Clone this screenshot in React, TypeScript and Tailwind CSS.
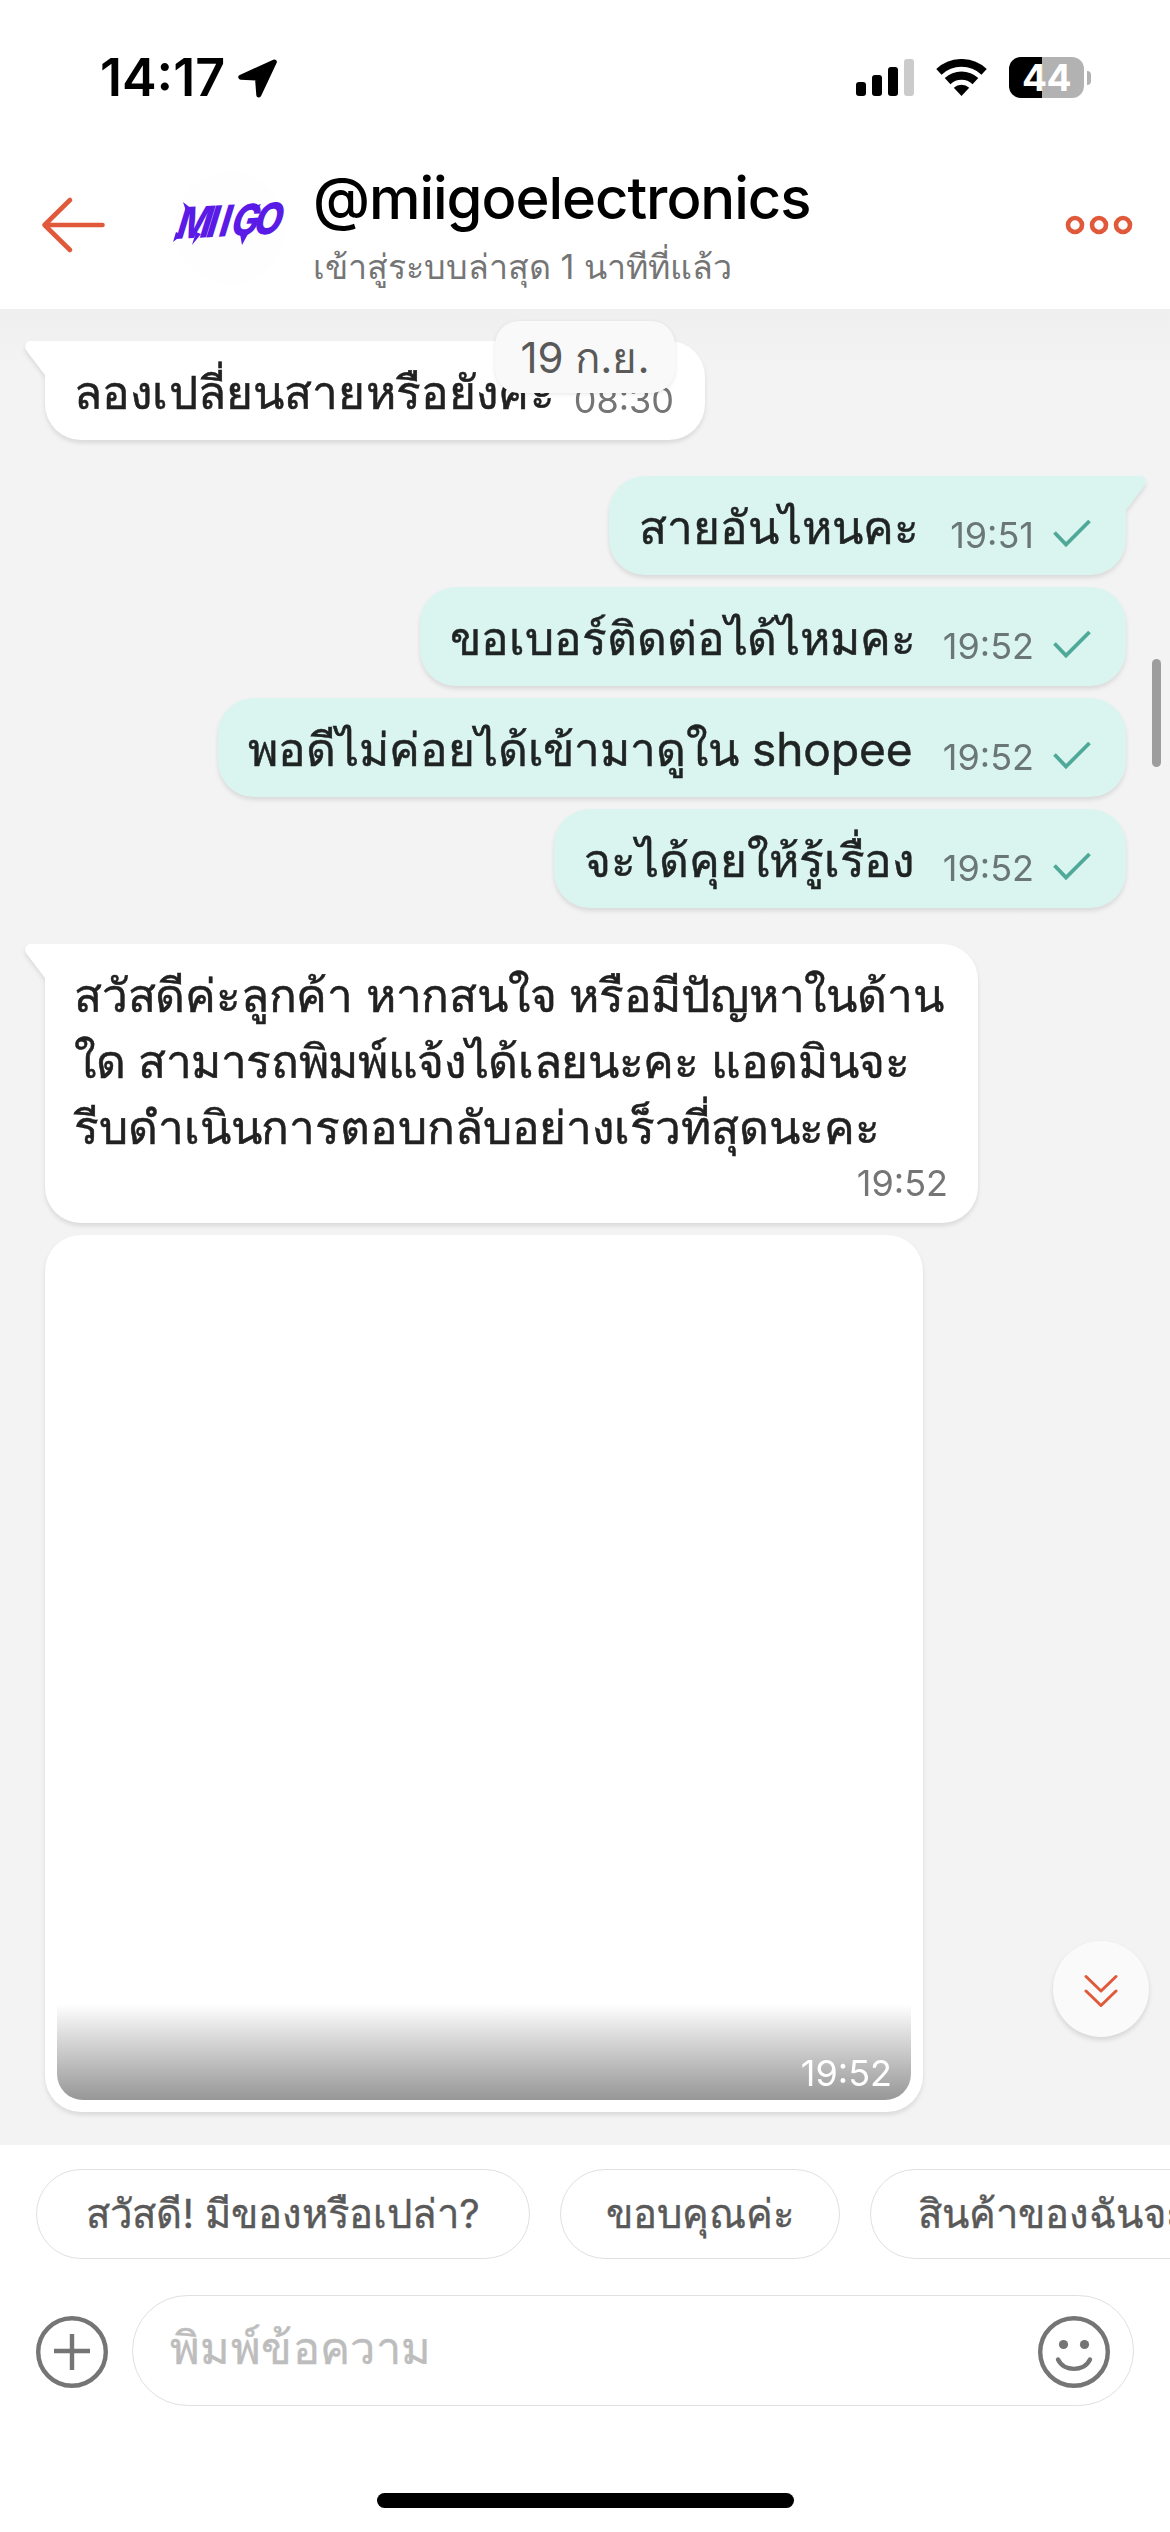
import type { ReactNode } from "react";
import clsx from "clsx";

interface OutgoingMessage {
    id: number;
    text: string;
    time: string;
    width: string;
    tail?: boolean;
}

const outgoing: OutgoingMessage[] = [
    { id: 1, text: "สายอันไหนคะ", time: "19:51", width: "w-[517px]", tail: true },
    { id: 2, text: "ขอเบอร์ติดต่อได้ไหมคะ", time: "19:52", width: "w-[706px]" },
    { id: 3, text: "พอดีไม่ค่อยได้เข้ามาดูใน shopee", time: "19:52", width: "w-[908px]" },
    { id: 4, text: "จะได้คุยให้รู้เรื่อง", time: "19:52", width: "w-[572px]" },
];

const replyLines = [
    { text: "สวัสดีค่ะลูกค้า หากสนใจ หรือมีปัญหาในด้าน", spacing: "tracking-[-0.2px]" },
    { text: "ใด สามารถพิมพ์แจ้งได้เลยนะคะ แอดมินจะ", spacing: "tracking-[-0.35px]" },
    { text: "รีบดำเนินการตอบกลับอย่างเร็วที่สุดนะคะ", spacing: "tracking-[-0.1px]" },
];

const quickReplies = [
    { text: "สวัสดี! มีของหรือเปล่า?", width: "w-[494px]" },
    { text: "ขอบคุณค่ะ", width: "w-[280px]" },
    { text: "สินค้าของฉันจะ", width: "w-[420px]" },
];

function StatusBar() {
    return (
        <div className="flex h-[150px] items-start justify-between pl-[100px] pr-[79px]">
            <div className="mt-[48px] flex items-center">
                <span className="w-[138px] text-[52px] leading-[60px] font-semibold">14:17</span>
                <svg className="h-[39px] w-[39px]" viewBox="0 0 39 39">
                    <path d="M36.3 3L2.8 18.2L19.5 19L20.8 36Z" fill="#000" stroke="#000" strokeWidth="5" strokeLinejoin="round" />
                </svg>
            </div>
            <div className="mt-[57px] flex h-[41px] items-center">
                <svg className="h-[37px] w-[58px]" viewBox="0 0 58 37">
                    <rect x="0" y="23" width="10" height="14" rx="3" />
                    <rect x="16" y="16" width="10" height="21" rx="3" />
                    <rect x="32" y="8" width="10" height="29" rx="3" />
                    <rect x="48" y="0" width="10" height="37" rx="3" fill="#cbcbcb" />
                </svg>
                <svg className="ml-[22px] h-[37px] w-[51px]" viewBox="0 0 51 37">
                    <path d="M2.9 12.8A33.1 33.1 0 0 1 48.1 12.8" fill="none" stroke="#000" strokeWidth="7.8" />
                    <path d="M11.6 22.1A20.4 20.4 0 0 1 39.4 22.1" fill="none" stroke="#000" strokeWidth="8.4" />
                    <path d="M25.5 37L17.8 28.7A11.3 11.3 0 0 1 33.2 28.7Z" />
                </svg>
                <div className="ml-[22px] flex h-[41px] w-[75px] items-center justify-center rounded-[12px] bg-linear-to-r from-black from-44% to-[#b2b2b2] to-44%">
                    <span className="text-[37px] leading-[41px] font-bold text-white tracking-[-0.5px]">44</span>
                </div>
                <div className="ml-[3px] h-[14px] w-[4px] rounded-r-full bg-[#b2b2b2]" />
            </div>
        </div>
    );
}

function Logo() {
    return (
        <svg className="h-[112px] w-[112px] overflow-visible" viewBox="0 0 112 112">
            <circle cx="56" cy="56" r="56" fill="#fefefe" />
            <g fill="#5a1be6">
                <text
                    x="0 36 51 65 92"
                    y="0"
                    fontSize="43"
                    fontWeight="800"
                    transform="translate(1 67) rotate(-3) skewX(-20) scale(0.84 1)"
                    className="font-[Inter]"
                >
                    MIIGO
                </text>
                {/* brush flicks */}
                <path d="M10 30L14 42L20 38ZM88 32L76 36L84 39ZM0 70L3 60L9 63ZM19 73L23 60L28 62ZM69 73L67 62L75 62Z" />
            </g>
        </svg>
    );
}

function Header() {
    return (
        <div className="flex h-[159px] pl-[40px] pr-[37px]">
            <svg className="mt-[46px] h-[58px] w-[66px]" viewBox="0 0 66 58">
                <path d="M30 4L4.5 29L30 54M4.5 29H62.5" fill="none" stroke="#e0593a" strokeWidth="4.6" strokeLinecap="round" strokeLinejoin="round" />
            </svg>
            <div className="ml-[67px] mt-[22px]">
                <Logo />
            </div>
            <div className="ml-[28px] mt-[12px] flex-1 whitespace-nowrap">
                <h1 className="text-[58px] leading-[72px] font-medium tracking-[-1.05px]">@miigoelectronics</h1>
                <p className="mt-[11px] text-[34px] leading-[44px] text-[#757575]">เข้าสู่ระบบล่าสุด 1 นาทีที่แล้ว</p>
            </div>
            <svg className="mt-[65px] h-[20px] w-[68px]" viewBox="0 0 68 20">
                <g fill="none" stroke="#e0593a" strokeWidth="4.6">
                    <circle cx="10" cy="10" r="7" />
                    <circle cx="34" cy="10" r="7" />
                    <circle cx="58" cy="10" r="7" />
                </g>
            </svg>
        </div>
    );
}

function Bubble({ className, tail, children }: { className: string; tail?: "left" | "right"; children: ReactNode }) {
    return (
        <div
            className={clsx(
                "relative rounded-[36px] drop-shadow-[0_3px_2px_rgba(0,0,0,0.10)]",
                tail === "left" && "rounded-tl-none",
                tail === "right" && "rounded-tr-none",
                className,
            )}
        >
            {tail && (
                <svg
                    className={clsx("absolute top-0 h-[34px] w-[22px]", tail === "left" ? "-left-[20px]" : "-right-[20px] -scale-x-100")}
                    viewBox="0 0 22 34"
                >
                    <path d="M22 0H6C1 0 -1 4 1 9L20 34H22Z" fill={tail === "left" ? "#fff" : "#daf4f0"} />
                </svg>
            )}
            {children}
        </div>
    );
}

function Tick() {
    return (
        <svg className="ml-[18px] mt-[15px] h-[30px] w-[40px]" viewBox="0 0 40 30">
            <path d="M2.5 14.5L14 26.5L37.5 3" fill="none" stroke="#4fa999" strokeWidth="3.8" />
        </svg>
    );
}

function Messages() {
    return (
        <div className="relative flex h-[1836px] flex-col items-start bg-[#f3f3f3] bg-linear-to-b from-[#efefef] from-0% to-[#f3f3f3] to-3% pt-[32px] pl-[45px] pr-[44px] whitespace-nowrap">
            <Bubble tail="left" className="flex h-[99px] w-[660px] items-center bg-white pl-[29px] pr-[31px]">
                <span className="mt-[3px] text-[46px] leading-[66px] tracking-[0.15px] text-[#212121] [-webkit-text-stroke:0.5px]">ลองเปลี่ยนสายหรือยังคะ</span>
                <span className="ml-auto mt-[19px] text-[36px] leading-[44px] text-[#757575]">08:30</span>
            </Bubble>

            <div className="mt-[36px] flex flex-col items-end gap-[12px] self-stretch">
                {outgoing.map((m) => (
                    <Bubble key={m.id} tail={m.tail ? "right" : undefined} className={clsx("flex h-[99px] items-center bg-[#daf4f0] pl-[30px] pr-[34px]", m.width)}>
                        <span className="mt-[3px] text-[46px] leading-[66px] tracking-[-0.05px] text-[#1f2423] [-webkit-text-stroke:0.5px]">{m.text}</span>
                        <span className="ml-auto mt-[19px] text-[36px] leading-[44px] text-[#6b7776]">{m.time}</span>
                        <Tick />
                    </Bubble>
                ))}
            </div>

            <Bubble tail="left" className="mt-[36px] flex h-[279px] w-[933px] flex-col bg-white pt-[18px] pl-[29px] pr-[30px]">
                {replyLines.map((line) => (
                    <span key={line.text} className={clsx("text-[46px] leading-[66px] text-[#212121] [-webkit-text-stroke:0.5px]", line.spacing)}>
                        {line.text}
                    </span>
                ))}
                <span className="mt-px self-end text-[36px] leading-[44px] text-[#757575]">19:52</span>
            </Bubble>

            <Bubble className="mt-[12px] h-[877px] w-[878px] bg-white p-[12px]">
                <div className="flex h-full items-end overflow-hidden rounded-[26px] bg-white">
                    <div className="flex h-[96px] w-full items-end justify-end bg-linear-to-b from-white to-[#979797] pr-[19px] pb-[5px]">
                        <span className="text-[36px] leading-[44px] text-white">19:52</span>
                    </div>
                </div>
            </Bubble>

            {/* floating date, scrollbar and jump-to-latest button */}
            <div className="absolute top-[12px] left-[495px] flex h-[72px] w-[180px] items-center justify-center rounded-[24px] bg-[#f9f9f9] shadow-[0_1px_4px_rgba(0,0,0,0.10)]">
                <span className="mt-[2px] text-[42px] leading-[60px] text-[#595959]">19 ก.ย.</span>
            </div>
            <div className="absolute top-[350px] right-[9px] h-[108px] w-[9px] rounded-full bg-[#9d9d9d]" />
            <div className="absolute top-[1632px] right-[21px] flex size-[96px] items-center justify-center rounded-full bg-[#fafafa] shadow-[0_3px_5px_rgba(0,0,0,0.12)]">
                <svg className="mt-[4px] h-[34px] w-[34px]" viewBox="0 0 34 34">
                    <path d="M2 2.5L17 17L32 2.5M2 17L17 31.5L32 17" fill="none" stroke="#e0593a" strokeWidth="3" strokeLinecap="round" strokeLinejoin="round" />
                </svg>
            </div>
        </div>
    );
}

function Composer() {
    return (
        <div className="h-[387px] bg-white">
            <div className="flex gap-[30px] overflow-hidden pt-[24px] pl-[36px]">
                {quickReplies.map((chip, i) => (
                    <div
                        key={chip.text}
                        className={clsx(
                            "flex h-[90px] shrink-0 items-center rounded-full border border-[#e0e0e0] whitespace-nowrap",
                            i === 2 ? "pl-[47px]" : "justify-center",
                            chip.width,
                        )}
                    >
                        <span className="text-[40px] leading-[60px] text-[#595959] [-webkit-text-stroke:0.4px]">{chip.text}</span>
                    </div>
                ))}
            </div>
            <div className="mt-[36px] flex items-center pl-[36px]">
                <svg className="mt-[3px] size-[72px]" viewBox="0 0 72 72">
                    <circle cx="36" cy="36" r="33.8" fill="none" stroke="#757575" strokeWidth="4.4" />
                    <path d="M18 35H54M36 18V54" stroke="#757575" strokeWidth="4.4" />
                </svg>
                <div className="ml-[24px] flex h-[111px] w-[1002px] items-center justify-between rounded-full border border-[#e0e0e0] pr-[23px] pl-[37px]">
                    <span className="mb-[6px] text-[45px] leading-[66px] tracking-[0.4px] text-[#bdbdbd] [-webkit-text-stroke:0.4px]">พิมพ์ข้อความ</span>
                    <svg className="mt-[3px] size-[72px]" viewBox="0 0 72 72">
                        <circle cx="36" cy="36" r="33.8" fill="none" stroke="#757575" strokeWidth="4.4" />
                        <circle cx="25.5" cy="28.5" r="4.6" fill="#757575" />
                        <circle cx="46.5" cy="28.5" r="4.6" fill="#757575" />
                        <path d="M20 43.5C26 56 46 56 52 43.5" fill="none" stroke="#757575" strokeWidth="4.4" strokeLinecap="round" />
                    </svg>
                </div>
            </div>
            <div className="mx-auto mt-[87px] h-[15px] w-[417px] rounded-full bg-black" />
        </div>
    );
}

export default function App() {
    return (
        <div className="h-[2532px] w-[1170px] overflow-hidden bg-white font-[Inter,'Noto_Sans',sans-serif] text-black">
            <StatusBar />
            <Header />
            <Messages />
            <Composer />
        </div>
    );
}
